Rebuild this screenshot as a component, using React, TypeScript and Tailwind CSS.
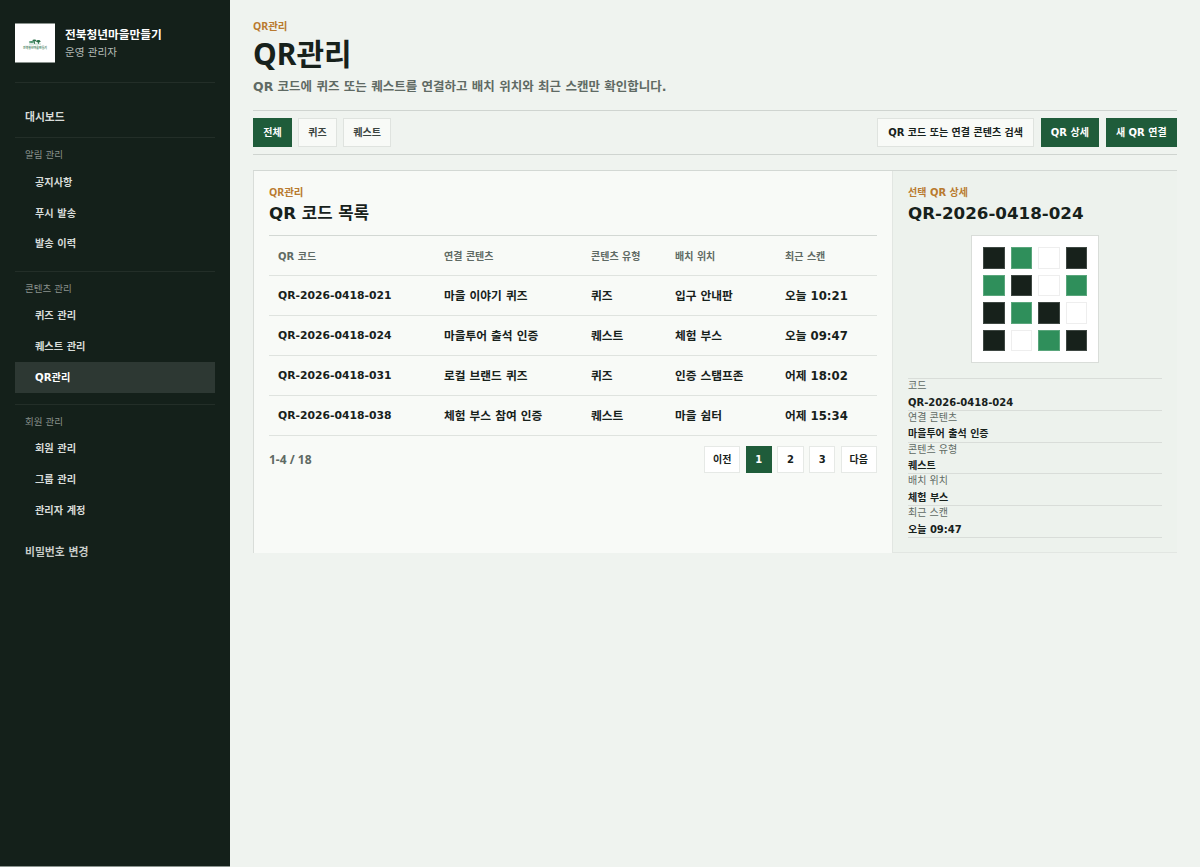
import React from 'react';

// 사이드바 메뉴 구성
const navGroups = [
  { title: '알림 관리', items: ['공지사항', '푸시 발송', '발송 이력'] },
  { title: '콘텐츠 관리', items: ['퀴즈 관리', '퀘스트 관리', 'QR관리'] },
  { title: '회원 관리', items: ['회원 관리', '그룹 관리', '관리자 계정'] },
];

const rows = [
  { code: 'QR-2026-0418-021', content: '마을 이야기 퀴즈', type: '퀴즈', place: '입구 안내판', scan: '오늘 10:21' },
  { code: 'QR-2026-0418-024', content: '마을투어 출석 인증', type: '퀘스트', place: '체험 부스', scan: '오늘 09:47' },
  { code: 'QR-2026-0418-031', content: '로컬 브랜드 퀴즈', type: '퀴즈', place: '인증 스탬프존', scan: '어제 18:02' },
  { code: 'QR-2026-0418-038', content: '체험 부스 참여 인증', type: '퀘스트', place: '마을 쉼터', scan: '어제 15:34' },
];

const details = [
  ['코드', 'QR-2026-0418-024'],
  ['연결 콘텐츠', '마을투어 출석 인증'],
  ['콘텐츠 유형', '퀘스트'],
  ['배치 위치', '체험 부스'],
  ['최근 스캔', '오늘 09:47'],
];

const qrCells = ['d', 'g', 'w', 'd', 'g', 'd', 'w', 'g', 'd', 'g', 'd', 'w', 'd', 'w', 'g', 'd'];

const LogoMark = () => (
  <div className="w-10 h-10 bg-white flex flex-col items-center justify-center shrink-0 border-y border-[#8a928d]">
    <svg width="14" height="6" viewBox="0 0 14 6" className="mb-[2px] mt-[2px]">
      <ellipse cx="3.6" cy="3" rx="2.8" ry="1" fill="#4d9470" />
      <ellipse cx="6.4" cy="1.6" rx="2" ry="1" fill="#2a6e48" />
      <ellipse cx="10.4" cy="2.2" rx="2" ry="1.2" fill="#2a6e48" />
      <rect x="6" y="2.4" width="0.9" height="2.6" fill="#2a6e48" />
      <rect x="10" y="3" width="0.9" height="2" fill="#2a6e48" />
      <rect x="1" y="4.7" width="12" height="0.6" fill="#8dbba2" />
    </svg>
    <span className="text-[2.9px] leading-none text-[#3d7a58] font-bold whitespace-nowrap">전북청년마을만들기</span>
  </div>
);

const SubItem = ({ label, tight }: { label: string; tight: boolean }) => {
  const active = label === 'QR관리';
  return (
    <div className={`${tight ? 'h-[30.7px]' : 'h-[31px]'} pl-5 flex items-center text-[10.2px] font-bold ${active ? 'bg-[#2d3833] text-white' : 'text-[#d8dcd9]'}`}>
      {label}
    </div>
  );
};

const Btn = ({ children, primary, muted, wide }: { children: React.ReactNode; primary?: boolean; muted?: boolean; wide?: boolean }) => (
  <div
    className={`h-[29px] flex items-center border text-[10px] font-bold whitespace-nowrap ${wide ? 'px-[10.2px]' : 'px-[9.3px]'} ${
      primary
        ? 'bg-[#1f5c3a] border-[#1f5c3a] text-white'
        : muted
          ? 'bg-[#f8faf7] border-[#dfe3df] text-[#3b443f]'
          : 'bg-[#f8faf7] border-[#dfe3df] text-[#17211b]'
    }`}
  >
    {children}
  </div>
);

const PageBtn = ({ children, active }: { children: React.ReactNode; active?: boolean }) => (
  <div
    className={`h-[27px] min-w-[26.5px] px-[8px] flex items-center justify-center border text-[10px] font-bold ${
      active ? 'bg-[#1f5c3a] border-[#1f5c3a] text-white' : 'bg-white border-[#e6e9e6] text-[#17211b]'
    }`}
  >
    {children}
  </div>
);

export default function App() {
  return (
    <div className="flex min-h-[867px] bg-[#eff3ef] text-[#17211b] [font-family:'DejaVu_Sans','Noto_Sans_CJK_KR',sans-serif]">
      {/* Sidebar */}
      <aside className="w-[230px] shrink-0 bg-[#14201a] border-b border-[#8b948f] px-[15px] pt-[23px]">
        <div className="flex items-center gap-[10px] pb-[19px] border-b border-[#232e28]">
          <LogoMark />
          <div className="pt-[1px]">
            <div className="text-[11.7px] font-bold text-white leading-[17px]">전북청년마을만들기</div>
            <div className="text-[10.6px] text-[#b5bcb7] leading-[17px]">운영 관리자</div>
          </div>
        </div>

        <div className="mt-[18px] h-[37px] pl-[10px] pb-[2px] flex items-center text-[10.8px] font-bold text-[#d8dcd9] border-b border-[#232e28]">
          대시보드
        </div>

        {navGroups.map((group, i) => (
          <div key={group.title} className={i === 0 ? 'pb-[12px] border-b border-[#232e28]' : i === 1 ? 'pb-[10.4px] border-b border-[#232e28]' : ''}>
            <div className={`pl-[10px] text-[9.5px] text-[#8a928d] leading-[14px] pt-[10px] ${i === 0 ? 'pb-[5.3px]' : 'pb-[4px]'}`}>
              {group.title}
            </div>
            {group.items.map((item) => (
              <SubItem key={item} label={item} tight={i === 0} />
            ))}
          </div>
        ))}

        <div className="mt-[12px] h-[31px] pl-[10px] flex items-center text-[10.8px] font-bold text-[#c8cdc9]">비밀번호 변경</div>
      </aside>

      {/* Main */}
      <main className="flex-1 min-w-0 pl-[23px] pr-[23px] pt-[19px]">
        <div className="text-[10.5px] font-bold text-[#b97a2f] leading-[14px] [font-family:'Noto_Sans','Noto_Sans_CJK_KR',sans-serif]">QR관리</div>
        <h1 className="text-[30px] font-bold leading-[38px] mt-[2px] [font-family:'Noto_Sans','Noto_Sans_CJK_KR',sans-serif]">QR관리</h1>
        <p className="text-[12.5px] font-bold text-[#5f6a64] leading-[18px] mt-[5px]">
          QR 코드에 퀴즈 또는 퀘스트를 연결하고 배치 위치와 최근 스캔만 확인합니다.
        </p>

        {/* Toolbar */}
        <div className="mt-[14px] h-[45px] flex items-center justify-between border-y border-[#cfd4d0]">
          <div className="flex gap-[6px]">
            <Btn primary>전체</Btn>
            <Btn muted>퀴즈</Btn>
            <Btn muted>퀘스트</Btn>
          </div>
          <div className="flex gap-[6.4px]">
            <Btn wide>QR 코드 또는 연결 콘텐츠 검색</Btn>
            <Btn primary>QR 상세</Btn>
            <Btn primary>새 QR 연결</Btn>
          </div>
        </div>

        {/* Panels */}
        <div className="mt-[15px] flex border-t border-[#d3d8d4] h-[383px]">
          <section className="flex-1 min-w-0 bg-[#f8faf7] border-l border-[#d9ddd9] pl-[15px] pr-[15px] pt-[14px]">
            <div className="text-[10.5px] font-bold text-[#b97a2f] leading-[14px] [font-family:'Noto_Sans','Noto_Sans_CJK_KR',sans-serif]">QR관리</div>
            <h2 className="text-[16.7px] font-bold leading-[22px] mt-[3px]">QR 코드 목록</h2>

            <table className="w-full mt-[11px] table-fixed border-t border-[#d3d8d4] border-collapse">
              <colgroup>
                <col className="w-[166px]" />
                <col className="w-[147px]" />
                <col className="w-[84px]" />
                <col className="w-[110px]" />
                <col />
              </colgroup>
              <thead>
                <tr className="h-[40px] border-b border-[#dfe3df]">
                  {['QR 코드', '연결 콘텐츠', '콘텐츠 유형', '배치 위치', '최근 스캔'].map((h) => (
                    <th key={h} className="pl-[9px] pt-[1px] text-left text-[10px] font-bold text-[#5f6a64]">{h}</th>
                  ))}
                </tr>
              </thead>
              <tbody>
                {rows.map((r) => (
                  <tr key={r.code} className="h-[40px] border-b border-[#dfe3df] text-[11.7px] font-bold">
                    <td className="pl-[9px] pt-[2px] text-[10.8px]">{r.code}</td>
                    <td className="pl-[9px] pt-[2px]">{r.content}</td>
                    <td className="pl-[9px] pt-[2px]">{r.type}</td>
                    <td className="pl-[9px] pt-[2px]">{r.place}</td>
                    <td className="pl-[9px] pt-[2px]">{r.scan}</td>
                  </tr>
                ))}
              </tbody>
            </table>

            <div className="mt-[10px] flex items-center justify-between">
              <span className="text-[12px] font-bold text-[#5f6a64] [font-family:'Noto_Sans','Noto_Sans_CJK_KR',sans-serif]">1-4 / 18</span>
              <div className="flex gap-[5.2px]">
                <PageBtn>이전</PageBtn>
                <PageBtn active>1</PageBtn>
                <PageBtn>2</PageBtn>
                <PageBtn>3</PageBtn>
                <PageBtn>다음</PageBtn>
              </div>
            </div>
          </section>

          {/* Detail */}
          <section className="w-[285px] shrink-0 bg-[#edf2ed] border-l border-[#e2e6e2] border-b px-[15px] pt-[15px]">
            <div className="text-[10px] font-bold text-[#b97a2f] leading-[14px]">선택 QR 상세</div>
            <h2 className="text-[16.7px] font-bold leading-[22px] mt-[2px]">QR-2026-0418-024</h2>

            <div className="mt-[11px] mx-auto w-[128px] h-[128px] bg-white border border-[#d9ddd9] grid grid-cols-4 gap-[6px] p-[11px]">
              {qrCells.map((c, i) => (
                <div
                  key={i}
                  className={`border ${
                    c === 'd' ? 'bg-[#17211b] border-[#3f4843]' : c === 'g' ? 'bg-[#2f8f5b] border-[#5aa67c]' : 'bg-white border-[#eeeeee]'
                  }`}
                />
              ))}
            </div>

            <dl className="mt-[15px] border-t border-[#d9ddd9]">
              {details.map(([k, v]) => (
                <div key={k} className="h-[31.8px] border-b border-[#d9ddd9]">
                  <dt className="text-[10px] leading-[14px] text-[#5f6a64]">{k}</dt>
                  <dd className="text-[10px] font-bold leading-[14px] mt-[2.6px]">{v}</dd>
                </div>
              ))}
            </dl>
          </section>
        </div>
      </main>
    </div>
  );
}
